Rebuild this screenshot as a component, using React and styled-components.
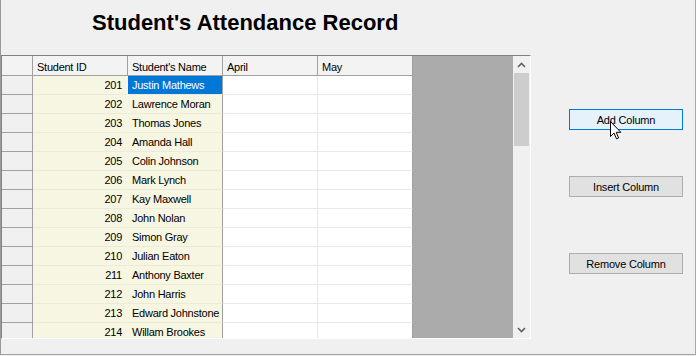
import React from 'react';
import styled, { createGlobalStyle } from 'styled-components';

const students = [
    [201, 'Justin Mathews'],
    [202, 'Lawrence Moran'],
    [203, 'Thomas Jones'],
    [204, 'Amanda Hall'],
    [205, 'Colin Johnson'],
    [206, 'Mark Lynch'],
    [207, 'Kay Maxwell'],
    [208, 'John Nolan'],
    [209, 'Simon Gray'],
    [210, 'Julian Eaton'],
    [211, 'Anthony Baxter'],
    [212, 'John Harris'],
    [213, 'Edward Johnstone'],
    [214, 'Willam Brookes'],
];

const Chevron = ({ down }) => (
    <svg width="9" height="6" viewBox="0 0 9 6">
        <polyline
            points={down ? '1,1 4.5,4.5 8,1' : '1,5 4.5,1.5 8,5'}
            fill="none"
            stroke="#606060"
            strokeWidth="1.6"
        />
    </svg>
);

const App = () => {
    return (
        <>
            <GlobalStyle />
            <Window>
                <Title>Student's Attendance Record</Title>
                <Main>
                    <GridView>
                        <TableArea>
                            <Cells>
                                <HeaderCell />
                                <HeaderCell>Student ID</HeaderCell>
                                <HeaderCell>Student's Name</HeaderCell>
                                <HeaderCell>April</HeaderCell>
                                <HeaderCell>May</HeaderCell>
                                {students.map(([id, name], i) => (
                                    <React.Fragment key={id}>
                                        <RowHead />
                                        <Cell $tint $right>{id}</Cell>
                                        <Cell $tint $selected={i === 0} $edge="#a0a0a0">{name}</Cell>
                                        <Cell />
                                        <Cell $edge="#a0a0a0" />
                                    </React.Fragment>
                                ))}
                            </Cells>
                        </TableArea>
                        <VScroll>
                            <ArrowButton><Chevron /></ArrowButton>
                            <Track>
                                <Thumb />
                            </Track>
                            <ArrowButton><Chevron down /></ArrowButton>
                        </VScroll>
                    </GridView>
                    <Actions>
                        <Button $top={54} $hot>Add Column</Button>
                        <Button $top={46}>Insert Column</Button>
                        <Button $top={56}>Remove Column</Button>
                    </Actions>
                </Main>
                <Pointer width="12" height="19" viewBox="0 0 12 19">
                    <path
                        d="M0.5,0.5 L0.5,15.5 L4,12 L6.5,17.8 L8.6,16.9 L6.2,11.3 L10.8,11.3 Z"
                        fill="#fff"
                        stroke="#000"
                        strokeWidth="1"
                        strokeLinejoin="miter"
                    />
                </Pointer>
            </Window>
        </>
    );
};

const GlobalStyle = createGlobalStyle`
    html, body {
        margin: 0;
        padding: 0;
        background: #f0f0f0;
        overflow: hidden;
    }
    body {
        font-family: "Liberation Sans", Arial, sans-serif;
    }
`;

const Window = styled.div`
    position: relative;
    width: 696px;
    height: 355px;
    box-sizing: border-box;
    background: #f0f0f0;
    border-left: 1px solid #9a9a9a;
    border-right: 1px solid #a8a8a8;
    border-bottom: 1px solid #a0a0a0;
    overflow: hidden;
`;

const Title = styled.h1`
    margin: 0;
    height: 55px;
    box-sizing: border-box;
    padding: 10px 0 0 91px;
    font-family: "Liberation Sans", Arial, sans-serif;
    font-size: 22px;
    font-weight: bold;
    line-height: normal;
    color: #000;
`;

const Main = styled.div`
    display: flex;
    align-items: flex-start;
`;

const GridView = styled.div`
    display: flex;
    width: 530px;
    height: 284px;
    box-sizing: border-box;
    border-top: 1px solid #828282;
    border-left: 1px solid #828282;
    border-right: 1px solid #ffffff;
    border-bottom: 1px solid #ffffff;
`;

const TableArea = styled.div`
    flex: 1;
    background: #ababab;
    overflow: hidden;
`;

const Cells = styled.div`
    display: grid;
    grid-template-columns: 31px repeat(4, 95px);
    grid-template-rows: 20px;
    grid-auto-rows: 19px;
    width: 411px;
    font-size: 11px;
    letter-spacing: -0.25px;
    color: #000;
`;

const HeaderCell = styled.div`
    box-sizing: border-box;
    padding: 2px 4px 0;
    display: flex;
    align-items: center;
    background: #f3f3f3;
    border-right: 1px solid #a0a0a0;
    border-bottom: 1px solid #a0a0a0;
    white-space: nowrap;
`;

const RowHead = styled.div`
    box-sizing: border-box;
    background: #f0f0f0;
    border-right: 1px solid #a0a0a0;
    border-bottom: 1px solid #a0a0a0;
`;

const Cell = styled.div`
    box-sizing: border-box;
    padding: 0 ${p => (p.$right ? '5px' : '4px')} 0 4px;
    display: flex;
    align-items: center;
    justify-content: ${p => (p.$right ? 'flex-end' : 'flex-start')};
    white-space: nowrap;
    overflow: hidden;
    background: ${p => (p.$selected ? '#0078d7' : p.$tint ? '#f7f6e2' : '#ffffff')};
    color: ${p => (p.$selected ? '#ffffff' : '#000000')};
    border-right: 1px solid ${p => p.$edge || (p.$tint ? '#f7f6e2' : '#e8e8e8')};
    border-bottom: 1px solid ${p => (p.$tint ? '#ecebd8' : '#e8e8e8')};
`;

const VScroll = styled.div`
    width: 17px;
    display: flex;
    flex-direction: column;
    background: #f0f0f0;
`;

const ArrowButton = styled.div`
    height: 17px;
    display: flex;
    align-items: center;
    justify-content: center;
`;

const Track = styled.div`
    flex: 1;
    padding: 0 1px;
`;

const Thumb = styled.div`
    height: 73px;
    background: #cdcdcd;
`;

const Actions = styled.div`
    display: flex;
    flex-direction: column;
    align-items: flex-start;
    padding-left: 38px;
`;

const Button = styled.div`
    margin-top: ${p => p.$top}px;
    width: 114px;
    height: 21px;
    box-sizing: border-box;
    display: flex;
    align-items: center;
    justify-content: center;
    font-size: 11px;
    letter-spacing: -0.2px;
    color: #000;
    background: ${p => (p.$hot ? '#e5f1fb' : '#e1e1e1')};
    border: 1px solid ${p => (p.$hot ? '#0078d7' : '#adadad')};
`;

const Pointer = styled.svg`
    position: absolute;
    left: 609px;
    top: 121px;
`;

export default App;
